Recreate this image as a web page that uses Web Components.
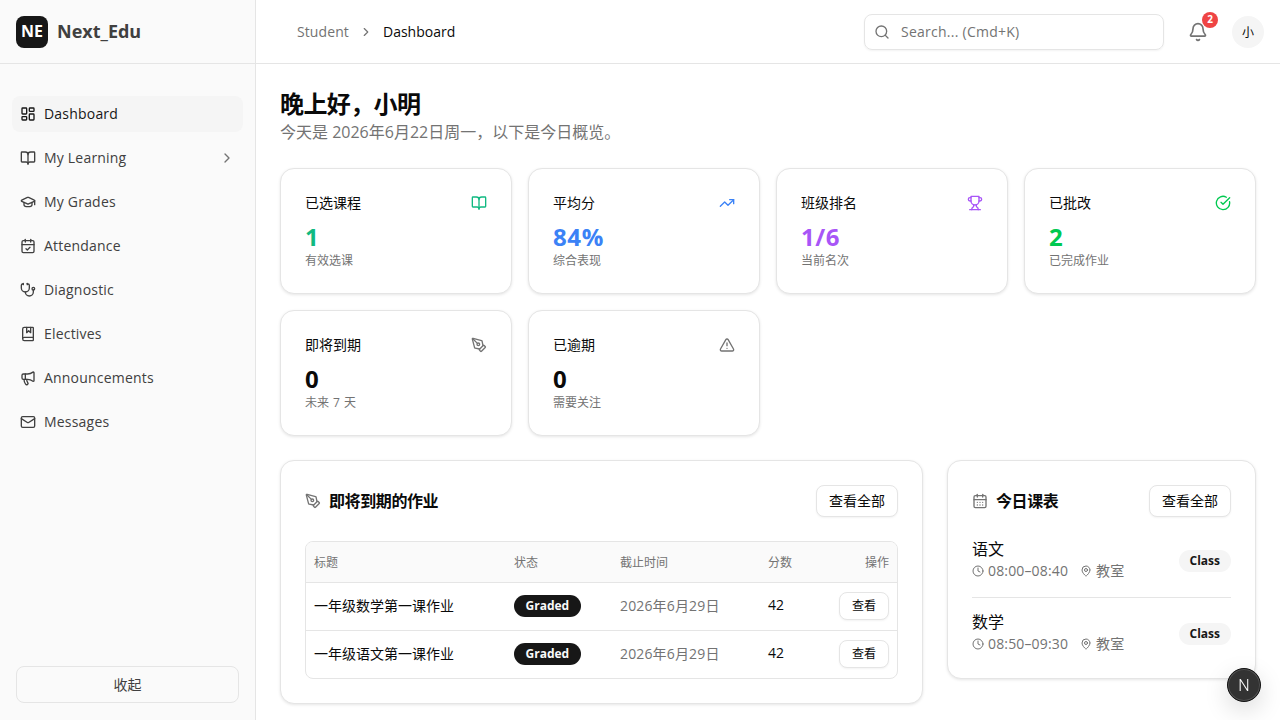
<!DOCTYPE html>
<html lang="zh-CN">
<head>
<meta charset="utf-8">
<title>Next_Edu</title>
<style>
  html, body {
    margin: 0;
    height: 100%;
    overflow: hidden;
    background: #fff;
    color: #0a0a0a;
    font-family: "Open Sans", "Noto Sans CJK SC", sans-serif;
    font-size: 14px;
  }
</style>
</head>
<body>
<edu-app></edu-app>
<script>
const ICONS = {
  dashboard: '<rect x="3" y="3" width="7" height="9" rx="1"/><rect x="14" y="3" width="7" height="5" rx="1"/><rect x="14" y="12" width="7" height="9" rx="1"/><rect x="3" y="16" width="7" height="5" rx="1"/>',
  book: '<path d="M12 7v14"/><path d="M3 18a1 1 0 0 1-1-1V4a1 1 0 0 1 1-1h5a4 4 0 0 1 4 4 4 4 0 0 1 4-4h5a1 1 0 0 1 1 1v13a1 1 0 0 1-1 1h-6a3 3 0 0 0-3 3 3 3 0 0 0-3-3z"/>',
  cap: '<path d="M21.42 10.922a1 1 0 0 0-.019-1.838L12.83 5.18a2 2 0 0 0-1.66 0L2.6 9.08a1 1 0 0 0 0 1.832l8.57 3.908a2 2 0 0 0 1.66 0z"/><path d="M22 10v6"/><path d="M6 12.5V16a6 3 0 0 0 12 0v-3.5"/>',
  calendarCheck: '<path d="M8 2v4"/><path d="M16 2v4"/><rect x="3" y="4" width="18" height="18" rx="2"/><path d="M3 10h18"/><path d="m9 16 2 2 4-4"/>',
  stethoscope: '<path d="M11 2v2"/><path d="M5 2v2"/><path d="M5 3H4a2 2 0 0 0-2 2v4a6 6 0 0 0 12 0V5a2 2 0 0 0-2-2h-1"/><path d="M8 15a6 6 0 0 0 12 0v-3"/><circle cx="20" cy="10" r="2"/>',
  bookMarked: '<path d="M10 2v8l3-3 3 3V2"/><path d="M4 19.5v-15A2.5 2.5 0 0 1 6.5 2H19a1 1 0 0 1 1 1v18a1 1 0 0 1-1 1H6.5a1 1 0 0 1 0-5H20"/>',
  megaphone: '<path d="M11 6a13 13 0 0 0 8.4-2.8A1 1 0 0 1 21 4v12a1 1 0 0 1-1.6.8A13 13 0 0 0 11 14H5a2 2 0 0 1-2-2V8a2 2 0 0 1 2-2z"/><path d="M6 14a12 12 0 0 0 2.4 7.2 2 2 0 0 0 3.2-2.4A8 8 0 0 1 10 14"/><path d="M8 6v8"/>',
  mail: '<path d="m22 7-8.991 5.727a2 2 0 0 1-2.009 0L2 7"/><rect x="2" y="4" width="20" height="16" rx="2"/>',
  chevron: '<path d="m9 18 6-6-6-6"/>',
  trending: '<path d="M16 7h6v6"/><path d="m22 7-8.5 8.5-5-5L2 17"/>',
  trophy: '<path d="M6 9H4.5a2.5 2.5 0 0 1 0-5H6"/><path d="M18 9h1.5a2.5 2.5 0 0 0 0-5H18"/><path d="M4 22h16"/><path d="M10 14.66V17c0 .55-.47.98-.97 1.21C7.85 18.75 7 20.24 7 22"/><path d="M14 14.66V17c0 .55.47.98.97 1.21C16.15 18.75 17 20.24 17 22"/><path d="M18 2H6v7a6 6 0 0 0 12 0V2Z"/>',
  check: '<path d="M21.801 10A10 10 0 1 1 17 3.335"/><path d="m9 11 3 3L22 4"/>',
  pen: '<path d="M15.707 21.293a1 1 0 0 1-1.414 0l-1.586-1.586a1 1 0 0 1 0-1.414l5.586-5.586a1 1 0 0 1 1.414 0l1.586 1.586a1 1 0 0 1 0 1.414z"/><path d="m18 13-1.375-6.874a1 1 0 0 0-.746-.776L3.235 2.028a1 1 0 0 0-1.207 1.207L5.35 15.879a1 1 0 0 0 .776.746L13 18"/><path d="m2.3 2.3 7.286 7.286"/><circle cx="11" cy="11" r="2"/>',
  alert: '<path d="m21.73 18-8-14a2 2 0 0 0-3.48 0l-8 14A2 2 0 0 0 4 21h16a2 2 0 0 0 1.73-3"/><path d="M12 9v4"/><path d="M12 17h.01"/>',
  search: '<path d="m21 21-4.34-4.34"/><circle cx="11" cy="11" r="8"/>',
  bell: '<path d="M10.268 21a2 2 0 0 0 3.464 0"/><path d="M3.262 15.326A1 1 0 0 0 4 17h16a1 1 0 0 0 .74-1.673C19.41 13.956 18 12.499 18 8A6 6 0 0 0 6 8c0 4.499-1.411 5.956-2.738 7.326"/>',
  calendar: '<path d="M8 2v4"/><path d="M16 2v4"/><rect x="3" y="4" width="18" height="18" rx="2"/><path d="M3 10h18"/><path d="M8 14h.01"/><path d="M12 14h.01"/><path d="M16 14h.01"/><path d="M8 18h.01"/><path d="M12 18h.01"/><path d="M16 18h.01"/>',
  clock: '<circle cx="12" cy="12" r="10"/><path d="M12 6v6l4 2"/>',
  pin: '<path d="M20 10c0 4.993-5.539 10.193-7.399 11.799a1 1 0 0 1-1.202 0C9.539 20.193 4 14.993 4 10a8 8 0 0 1 16 0"/><circle cx="12" cy="10" r="3"/>',
};

class UiIcon extends HTMLElement {
  connectedCallback() {
    const size = this.getAttribute('size') || 16;
    this.attachShadow({ mode: 'open' }).innerHTML = `
      <style>
        :host { display: inline-flex; flex: none; width: ${size}px; height: ${size}px; }
        svg { display: block; }
      </style>
      <svg xmlns="http://www.w3.org/2000/svg" width="${size}" height="${size}" viewBox="0 0 24 24" fill="none"
        stroke="currentColor" stroke-width="2" stroke-linecap="round" stroke-linejoin="round">${ICONS[this.getAttribute('name')]}</svg>`;
  }
}

class UiButton extends HTMLElement {
  constructor() {
    super();
    this.attachShadow({ mode: 'open' }).innerHTML = `
      <style>
        :host {
          display: inline-flex;
          align-items: center;
          justify-content: center;
          flex: none;
          box-sizing: border-box;
          height: 32px;
          padding: 0 12px 2px;
          background: #fff;
          border: 1px solid #e5e5e5;
          border-radius: 8px;
          box-shadow: 0 1px 2px rgba(0, 0, 0, 0.05);
          font-size: 14px;
          color: #0a0a0a;
        }
        :host([small]) { height: 28px; font-size: 12px; }
        :host([wide]) { height: 37px; background: transparent; color: #404040; box-shadow: none; }
      </style>
      <slot></slot>`;
  }
}

class UiBadge extends HTMLElement {
  constructor() {
    super();
    this.attachShadow({ mode: 'open' }).innerHTML = `
      <style>
        :host {
          display: inline-flex;
          align-items: center;
          flex: none;
          box-sizing: border-box;
          height: 22px;
          padding: 0 11.5px 2px;
          border-radius: 11px;
          background: #171717;
          color: #fafafa;
          font-size: 12px;
          font-weight: 700;
        }
        :host([soft]) { padding: 0 11px 2px; background: #f5f5f5; color: #171717; }
      </style>
      <slot></slot>`;
  }
}

class NavItem extends HTMLElement {
  constructor() {
    super();
    this.attachShadow({ mode: 'open' });
  }

  connectedCallback() {
    const more = this.hasAttribute('more') ? '<ui-icon class="more" name="chevron"></ui-icon>' : '';
    this.shadowRoot.innerHTML = `
      <style>
        :host {
          display: flex;
          align-items: center;
          gap: 8px;
          height: 36px;
          padding: 0 8px;
          border-radius: 8px;
          color: #404040;
          font-size: 14px;
          letter-spacing: 0.2px;
        }
        :host([active]) { background: #f5f5f5; color: #171717; }
        span { flex: 1; padding-bottom: 2px; }
        .more { color: #737373; }
      </style>
      <ui-icon name="${this.getAttribute('icon')}"></ui-icon>
      <span><slot></slot></span>
      ${more}`;
  }
}

class AppSidebar extends HTMLElement {
  constructor() {
    super();
    this.attachShadow({ mode: 'open' }).innerHTML = `
      <style>
        :host {
          display: flex;
          flex-direction: column;
          flex: none;
          box-sizing: border-box;
          width: 256px;
          height: 720px;
          background: #fafafa;
          border-right: 1px solid #e5e5e5;
        }
        .brand {
          display: flex;
          align-items: center;
          gap: 9px;
          box-sizing: border-box;
          height: 64px;
          padding: 0 16px;
          border-bottom: 1px solid #e5e5e5;
        }
        .logo {
          display: flex;
          align-items: center;
          justify-content: center;
          box-sizing: border-box;
          width: 32px;
          height: 32px;
          padding-bottom: 2px;
          border-radius: 8px;
          background: #171717;
          color: #fff;
          font-size: 16px;
          font-weight: 700;
        }
        .name { padding-bottom: 2px; font-size: 18px; font-weight: 700; color: #404040; }
        nav {
          display: flex;
          flex-direction: column;
          gap: 8px;
          flex: 1;
          padding: 32px 12px 0;
        }
        .foot { display: flex; flex-direction: column; padding: 0 16px 17px; }
      </style>
      <div class="brand"><div class="logo">NE</div><div class="name">Next_Edu</div></div>
      <nav>
        <nav-item icon="dashboard" active>Dashboard</nav-item>
        <nav-item icon="book" more>My Learning</nav-item>
        <nav-item icon="cap">My Grades</nav-item>
        <nav-item icon="calendarCheck">Attendance</nav-item>
        <nav-item icon="stethoscope">Diagnostic</nav-item>
        <nav-item icon="bookMarked">Electives</nav-item>
        <nav-item icon="megaphone">Announcements</nav-item>
        <nav-item icon="mail">Messages</nav-item>
      </nav>
      <div class="foot"><ui-button wide>收起</ui-button></div>`;
  }
}

class AppHeader extends HTMLElement {
  constructor() {
    super();
    this.attachShadow({ mode: 'open' }).innerHTML = `
      <style>
        :host {
          display: flex;
          align-items: center;
          flex: none;
          box-sizing: border-box;
          height: 64px;
          padding: 0 16px 0 41px;
          border-bottom: 1px solid #e5e5e5;
          background: #fff;
        }
        .crumbs { display: flex; align-items: center; gap: 10px; flex: 1; color: #737373; }
        .crumbs span, .crumbs b { padding-bottom: 1px; }
        .crumbs span { letter-spacing: 0.1px; }
        .crumbs b { font-weight: 400; color: #0a0a0a; }
        .search {
          display: flex;
          align-items: center;
          gap: 11px;
          box-sizing: border-box;
          width: 300px;
          height: 36px;
          padding: 0 9px;
          border: 1px solid #e5e5e5;
          border-radius: 8px;
          box-shadow: 0 1px 2px rgba(0, 0, 0, 0.05);
          color: #737373;
          letter-spacing: 0.25px;
        }
        .search span { padding-bottom: 1px; }
        .bell { position: relative; display: flex; margin-left: 24px; color: #737373; }
        .count {
          position: absolute;
          top: -10px;
          right: -10px;
          width: 16px;
          height: 16px;
          border-radius: 50%;
          background: #ef4444;
          color: #fff;
          font-size: 10px;
          font-weight: 700;
          line-height: 15px;
          text-align: center;
        }
        .avatar {
          display: flex;
          align-items: center;
          justify-content: center;
          width: 32px;
          height: 32px;
          margin-left: 24px;
          border-radius: 50%;
          background: #f5f5f5;
          font-size: 12px;
        }
      </style>
      <div class="crumbs"><span>Student</span><ui-icon name="chevron" size="14"></ui-icon><b>Dashboard</b></div>
      <div class="search"><ui-icon name="search"></ui-icon><span>Search... (Cmd+K)</span></div>
      <div class="bell"><ui-icon name="bell" size="20"></ui-icon><span class="count">2</span></div>
      <div class="avatar">小</div>`;
  }
}

class StatCard extends HTMLElement {
  constructor() {
    super();
    this.attachShadow({ mode: 'open' });
  }

  connectedCallback() {
    const tone = this.getAttribute('tone') || '#0a0a0a';
    const iconTone = this.getAttribute('tone') || '#737373';
    this.shadowRoot.innerHTML = `
      <style>
        :host {
          display: block;
          box-sizing: border-box;
          height: 126px;
          padding: 24px;
          background: #fff;
          border: 1px solid #e5e5e5;
          border-radius: 14px;
          box-shadow: 0 1px 3px rgba(0, 0, 0, 0.1);
        }
        .top { display: flex; align-items: center; justify-content: space-between; height: 20px; margin-bottom: 8px; }
        .top span { padding-bottom: 2px; }
        .value { font-size: 24px; font-weight: 700; line-height: 32px; letter-spacing: 0.6px; color: ${tone}; }
        .note { font-size: 12px; line-height: 16px; word-spacing: 1px; color: #737373; }
        ui-icon { color: ${iconTone}; }
      </style>
      <div class="top"><span>${this.getAttribute('label')}</span><ui-icon name="${this.getAttribute('icon')}"></ui-icon></div>
      <div class="value">${this.getAttribute('value')}</div>
      <div class="note">${this.getAttribute('note')}</div>`;
  }
}

class PanelCard extends HTMLElement {
  constructor() {
    super();
    this.attachShadow({ mode: 'open' });
  }

  connectedCallback() {
    this.shadowRoot.innerHTML = `
      <style>
        :host {
          display: block;
          align-self: start;
          box-sizing: border-box;
          padding: 24px;
          background: #fff;
          border: 1px solid #e5e5e5;
          border-radius: 14px;
          box-shadow: 0 1px 3px rgba(0, 0, 0, 0.1);
        }
        header { display: flex; align-items: center; gap: 8px; height: 32px; }
        h2 { flex: 1; margin: 0 0 2px; font-size: 16px; font-weight: 700; letter-spacing: -0.4px; }
        ui-icon { color: #737373; }
      </style>
      <header>
        <ui-icon name="${this.getAttribute('icon')}"></ui-icon>
        <h2>${this.getAttribute('heading')}</h2>
        <ui-button>查看全部</ui-button>
      </header>
      <slot></slot>`;
  }
}

class AssignmentTable extends HTMLElement {
  rows = ['一年级数学第一课作业', '一年级语文第一课作业'];

  constructor() {
    super();
    this.attachShadow({ mode: 'open' });
  }

  connectedCallback() {
    const rows = this.rows.map(title => `
      <div class="row">
        <span class="text">${title}</span>
        <span><ui-badge>Graded</ui-badge></span>
        <span class="text muted">2026年6月29日</span>
        <span class="text">42</span>
        <span class="end"><ui-button small>查看</ui-button></span>
      </div>`
    ).join('');

    this.shadowRoot.innerHTML = `
      <style>
        :host {
          display: block;
          margin-top: 24px;
          border: 1px solid #e5e5e5;
          border-radius: 8px;
          overflow: hidden;
        }
        .row {
          display: grid;
          grid-template-columns: 200px 106px 148px 1fr 80px;
          align-items: center;
          height: 48px;
          padding: 0 8px 1px;
          border-top: 1px solid #e5e5e5;
          box-sizing: border-box;
        }
        .head {
          height: 40px;
          border-top: 0;
          background: #fafafa;
          color: #737373;
          font-size: 12px;
        }
        .text { padding-bottom: 3px; }
        .muted { color: #737373; letter-spacing: 0.15px; }
        .end { display: flex; justify-content: flex-end; }
      </style>
      <div class="row head">
        <span>标题</span><span>状态</span><span>截止时间</span><span>分数</span><span class="end">操作</span>
      </div>
      ${rows}`;
  }
}

class ScheduleItem extends HTMLElement {
  constructor() {
    super();
    this.attachShadow({ mode: 'open' });
  }

  connectedCallback() {
    this.shadowRoot.innerHTML = `
      <style>
        :host {
          display: flex;
          align-items: center;
          justify-content: space-between;
          padding-bottom: 16px;
          border-bottom: 1px solid #e5e5e5;
        }
        :host([last]) { padding-bottom: 0; border-bottom: 0; }
        .name { font-size: 16px; line-height: 24px; }
        .meta { display: flex; align-items: center; gap: 4px; height: 20px; color: #737373; }
        .meta span { padding-bottom: 2px; letter-spacing: 0.15px; }
        .place { margin-left: 8px; }
        ui-badge { margin-top: 4px; }
      </style>
      <div>
        <div class="name">${this.getAttribute('name')}</div>
        <div class="meta">
          <ui-icon name="clock" size="12"></ui-icon><span>${this.getAttribute('time')}</span>
          <ui-icon class="place" name="pin" size="12"></ui-icon><span>教室</span>
        </div>
      </div>
      <ui-badge soft>Class</ui-badge>`;
  }
}

class ScheduleList extends HTMLElement {
  constructor() {
    super();
    this.attachShadow({ mode: 'open' }).innerHTML = `
      <style>
        :host { display: flex; flex-direction: column; gap: 12px; margin-top: 20px; }
      </style>
      <slot></slot>`;
  }
}

class DevBadge extends HTMLElement {
  constructor() {
    super();
    this.attachShadow({ mode: 'open' }).innerHTML = `
      <style>
        :host {
          position: fixed;
          left: 1227px;
          top: 668px;
          display: flex;
          align-items: center;
          justify-content: center;
          box-sizing: border-box;
          width: 34px;
          height: 34px;
          border-radius: 50%;
          background: #333;
          border: 1px solid #111;
          box-shadow: 0 8px 24px rgba(0, 0, 0, 0.15), inset 0 0 0 1px rgba(255, 255, 255, 0.15);
          color: #fff;
          font-family: Roboto, sans-serif;
          font-size: 16px;
          font-weight: 300;
        }
      </style>
      N`;
  }
}

class EduApp extends HTMLElement {
  constructor() {
    super();
    this.attachShadow({ mode: 'open' }).innerHTML = `
      <style>
        :host { display: flex; width: 1280px; height: 720px; overflow: hidden; }
        .main { display: flex; flex-direction: column; flex: 1; min-width: 0; }
        .content { flex: 1; padding: 24px; overflow: hidden; }
        h1 { margin: 0; font-size: 24px; line-height: 32px; font-weight: 700; letter-spacing: -0.6px; }
        .sub { margin: 0 0 24px; font-size: 16px; line-height: 24px; color: #737373; }
        .stats { display: grid; grid-template-columns: repeat(4, 1fr); gap: 16px; margin-bottom: 24px; }
        .panels { display: grid; grid-template-columns: 643fr 309fr; gap: 24px; }
      </style>
      <app-sidebar></app-sidebar>
      <div class="main">
        <app-header></app-header>
        <div class="content">
          <h1>晚上好，小明</h1>
          <p class="sub">今天是 2026年6月22日周一，以下是今日概览。</p>
          <div class="stats">
            <stat-card label="已选课程" icon="book" tone="#10b981" value="1" note="有效选课"></stat-card>
            <stat-card label="平均分" icon="trending" tone="#3b82f6" value="84%" note="综合表现"></stat-card>
            <stat-card label="班级排名" icon="trophy" tone="#a855f7" value="1/6" note="当前名次"></stat-card>
            <stat-card label="已批改" icon="check" tone="#00c950" value="2" note="已完成作业"></stat-card>
            <stat-card label="即将到期" icon="pen" value="0" note="未来 7 天"></stat-card>
            <stat-card label="已逾期" icon="alert" value="0" note="需要关注"></stat-card>
          </div>
          <div class="panels">
            <panel-card icon="pen" heading="即将到期的作业"><assignment-table></assignment-table></panel-card>
            <panel-card icon="calendar" heading="今日课表">
              <schedule-list>
                <schedule-item name="语文" time="08:00–08:40"></schedule-item>
                <schedule-item name="数学" time="08:50–09:30" last></schedule-item>
              </schedule-list>
            </panel-card>
          </div>
        </div>
      </div>
      <dev-badge></dev-badge>`;
  }
}

customElements.define('ui-icon', UiIcon);
customElements.define('ui-button', UiButton);
customElements.define('ui-badge', UiBadge);
customElements.define('nav-item', NavItem);
customElements.define('app-sidebar', AppSidebar);
customElements.define('app-header', AppHeader);
customElements.define('stat-card', StatCard);
customElements.define('panel-card', PanelCard);
customElements.define('assignment-table', AssignmentTable);
customElements.define('schedule-item', ScheduleItem);
customElements.define('schedule-list', ScheduleList);
customElements.define('dev-badge', DevBadge);
customElements.define('edu-app', EduApp);
</script>
</body>
</html>
